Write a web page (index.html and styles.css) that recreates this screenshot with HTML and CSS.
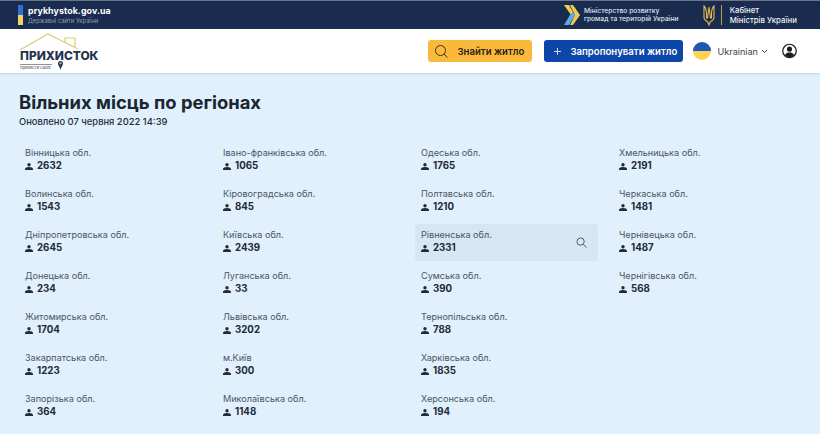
FILE: index.html
```html
<!DOCTYPE html>
<html lang="uk">
<head>
<meta charset="utf-8">
<title>Прихисток</title>
<link rel="stylesheet" href="styles.css">
</head>
<body>
<svg class="defs" width="0" height="0"><symbol id="person" viewBox="0 0 8 7"><circle cx="4" cy="1.700" r="1.700"/><path d="M0 7V6c0-1.300 1.500-2 4-2s4 .7 4 2v1z"/></symbol></svg>
<div class="gov-bar">
  <div class="gov-left">
    <svg class="ua-flag" width="5" height="20" viewBox="0 0 5 20"><rect width="5" height="10" fill="#2f6fd6"/><rect y="10" width="5" height="10" fill="#f3d45c"/></svg>
    <div class="gov-site">
      <div class="gov-domain">prykhystok.gov.ua</div>
      <div class="gov-sub">Державні сайти України</div>
    </div>
  </div>
  <div class="gov-right">
    <div class="gov-org">
      <svg width="16" height="20" viewBox="0 0 16 20"><path d="M0 0h5l4 7-2 3z" fill="#efcb4e"/><path d="M0 20h5l6-10-2-3-3 3z" fill="#5aaee6"/><path d="M6 0h3l7 10-7 10H6l5-10z" fill="#eccb55"/></svg>
      <div class="gov-min">Міністерство розвитку<br>громад та територій України</div>
    </div>
    <div class="gov-org gov-org-cabinet">
      <svg class="trident" width="12" height="22" viewBox="0 0 12 22" fill="none" stroke="#e3bb50" stroke-width="1.100"><path d="M1 2v11c0 3 2 4 3.500 4.500L6 21l1.500-3.500C9 17 11 16 11 13V2C9.500 3.500 8.500 6 8.500 10v4h-1L6 3 4.500 14h-1v-4C3.500 6 2.500 3.500 1 2z"/></svg>
      <span class="gov-divider"></span>
      <div class="gov-cab">Кабінет<br>Міністрів України</div>
    </div>
  </div>
</div>

<header class="site-header">
  <a class="logo">
    <svg class="logo-roof" width="60" height="18" viewBox="0 0 60 18" fill="none" stroke="#dccb7c" stroke-width="1.200"><path d="M0 17 28 1l30 15M45 9V5h10v10"/></svg>
    <div class="logo-name">ПРИХИСТОК</div>
    <div class="logo-row">
      <span class="logo-tag">прихисти своїх</span>
      <svg width="5" height="9" viewBox="0 0 5 9"><path d="M0 2.500a2.500 2.500 0 0 1 5 0C5 4.500 3 6 2.500 9 2 6 0 4.500 0 2.500z" fill="#24334f"/><circle cx="2.500" cy="2.300" r="1.100" fill="#dccb7c"/></svg>
    </div>
  </a>
  <nav class="actions">
    <button class="btn btn-find">
      <svg width="13" height="13" viewBox="0 0 13 13" fill="none" stroke="#3a3220" stroke-width="1"><circle cx="5.500" cy="5.500" r="5"/><path d="M9 9l3.500 3.500"/></svg>
      Знайти житло
    </button>
    <button class="btn btn-offer">
      <svg width="9" height="9" viewBox="0 0 9 9" stroke="#cfe0fa" stroke-width="1"><path d="M4.500 1v7M1 4.500h7"/></svg>
      Запропонувати житло
    </button>
    <div class="lang">
      <svg width="18" height="18" viewBox="0 0 18 18"><circle cx="9" cy="9" r="9" fill="#ffd34d"/><path d="M0 9a9 9 0 0 1 18 0z" fill="#1f57b8"/></svg>
      <span>Ukrainian</span>
      <svg width="7" height="5" viewBox="0 0 7 5" fill="none" stroke="#333" stroke-width="1"><path d="M1 1l2.500 2.500L6 1"/></svg>
    </div>
    <svg class="user" width="15" height="16" viewBox="0 0 16 16"><circle cx="8" cy="8" r="7.200" fill="none" stroke="#1c1c1c" stroke-width="1.300"/><circle cx="8" cy="6" r="2.700" fill="#1c1c1c"/><path d="M3 12.500c1-2.500 3-3 5-3s4 .5 5 3a7 7 0 0 1-10 0z" fill="#1c1c1c"/></svg>
  </nav>
</header>

<main class="content">
  <h1 class="title">Вільних місць по регіонах</h1>
  <p class="updated">Оновлено 07 червня 2022 14:39</p>
  <div class="regions">
    <div class="region"><div class="r-name">Вінницька обл.</div><div class="r-count"><svg class="p"><use href="#person"/></svg>2632</div></div>
    <div class="region"><div class="r-name">Івано-франківська обл.</div><div class="r-count"><svg class="p"><use href="#person"/></svg>1065</div></div>
    <div class="region"><div class="r-name">Одеська обл.</div><div class="r-count"><svg class="p"><use href="#person"/></svg>1765</div></div>
    <div class="region"><div class="r-name">Хмельницька обл.</div><div class="r-count"><svg class="p"><use href="#person"/></svg>2191</div></div>

    <div class="region"><div class="r-name">Волинська обл.</div><div class="r-count"><svg class="p"><use href="#person"/></svg>1543</div></div>
    <div class="region"><div class="r-name">Кіровоградська обл.</div><div class="r-count"><svg class="p"><use href="#person"/></svg>845</div></div>
    <div class="region"><div class="r-name">Полтавська обл.</div><div class="r-count"><svg class="p"><use href="#person"/></svg>1210</div></div>
    <div class="region"><div class="r-name">Черкаська обл.</div><div class="r-count"><svg class="p"><use href="#person"/></svg>1481</div></div>

    <div class="region"><div class="r-name">Дніпропетровська обл.</div><div class="r-count"><svg class="p"><use href="#person"/></svg>2645</div></div>
    <div class="region"><div class="r-name">Київська обл.</div><div class="r-count"><svg class="p"><use href="#person"/></svg>2439</div></div>
    <div class="region region-active"><div class="r-name">Рівненська обл.</div><div class="r-count"><svg class="p"><use href="#person"/></svg>2331</div>
      <svg class="r-search" width="11" height="11" viewBox="0 0 12 12" fill="none" stroke="#444f5c" stroke-width="1"><circle cx="5" cy="5" r="4"/><path d="M8 8l3.500 3.500"/></svg></div>
    <div class="region"><div class="r-name">Чернівецька обл.</div><div class="r-count"><svg class="p"><use href="#person"/></svg>1487</div></div>

    <div class="region"><div class="r-name">Донецька обл.</div><div class="r-count"><svg class="p"><use href="#person"/></svg>234</div></div>
    <div class="region"><div class="r-name">Луганська обл.</div><div class="r-count"><svg class="p"><use href="#person"/></svg>33</div></div>
    <div class="region"><div class="r-name">Сумська обл.</div><div class="r-count"><svg class="p"><use href="#person"/></svg>390</div></div>
    <div class="region"><div class="r-name">Чернігівська обл.</div><div class="r-count"><svg class="p"><use href="#person"/></svg>568</div></div>

    <div class="region"><div class="r-name">Житомирська обл.</div><div class="r-count"><svg class="p"><use href="#person"/></svg>1704</div></div>
    <div class="region"><div class="r-name">Львівська обл.</div><div class="r-count"><svg class="p"><use href="#person"/></svg>3202</div></div>
    <div class="region"><div class="r-name">Тернопільська обл.</div><div class="r-count"><svg class="p"><use href="#person"/></svg>788</div></div>
    <div class="region region-empty"></div>

    <div class="region"><div class="r-name">Закарпатська обл.</div><div class="r-count"><svg class="p"><use href="#person"/></svg>1223</div></div>
    <div class="region"><div class="r-name">м.Київ</div><div class="r-count"><svg class="p"><use href="#person"/></svg>300</div></div>
    <div class="region"><div class="r-name">Харківська обл.</div><div class="r-count"><svg class="p"><use href="#person"/></svg>1835</div></div>
    <div class="region region-empty"></div>

    <div class="region"><div class="r-name">Запорізька обл.</div><div class="r-count"><svg class="p"><use href="#person"/></svg>364</div></div>
    <div class="region"><div class="r-name">Миколаївська обл.</div><div class="r-count"><svg class="p"><use href="#person"/></svg>1148</div></div>
    <div class="region"><div class="r-name">Херсонська обл.</div><div class="r-count"><svg class="p"><use href="#person"/></svg>194</div></div>
  </div>
</main>
</body>
</html>
```

FILE: styles.css
```css
* { box-sizing: border-box; }
html, body { margin: 0; height: 434px; overflow: hidden; }
body { background: #e0f0fc; font-family: Inter, "Noto Sans", sans-serif; color: #1c2530; }
.defs { display: block; height: 0; }

.gov-bar {
  height: 29px;
  background: #1a2b50;
  border-top: 1px solid #6b7486;
  display: flex;
  justify-content: space-between;
  align-items: center;
  padding: 0 23px 0 18px;
  color: #fff;
}
.gov-left { display: flex; align-items: center; gap: 5px; }
.ua-flag { display: block; }
.gov-domain { font-size: 8.800px; font-weight: 700; line-height: 11px; letter-spacing: .1px; }
.gov-sub { font-size: 5.900px; line-height: 9px; color: #8f9bb3; }
.gov-right { display: flex; align-items: center; gap: 24px; }
.gov-org { display: flex; align-items: center; gap: 4px; }
.gov-min { font-size: 6.700px; line-height: 8px; color: #dfe4ee; font-weight: 500; }
.gov-org-cabinet { gap: 6px; }
.trident { display: block; }
.gov-divider { width: 1px; height: 20px; background: #b99e50; margin-right: 2px; }
.gov-cab { font-size: 7.800px; line-height: 10px; font-weight: 500; color: #f0f2f6; }

.site-header {
  height: 44px;
  background: #fff;
  display: flex;
  justify-content: space-between;
  align-items: center;
  padding: 0 23px 0 20px;
  box-shadow: 0 1px 2px rgba(90, 120, 150, .25);
}
.logo { display: flex; flex-direction: column; width: 80px; color: #24334f; }
.logo-roof { display: block; }
.logo-name { font-size: 11.900px; line-height: 10px; font-weight: 800; white-space: nowrap; }
.logo-row { display: flex; align-items: flex-start; gap: 6px; height: 9px; }
.logo-tag { font-size: 4.200px; color: #444; border-top: 1px solid #8a93a3; margin-top: 3px; line-height: 6px; width: 32px; white-space: nowrap; }

.actions { display: flex; align-items: center; }
.btn {
  height: 22px;
  border: 0;
  border-radius: 3px;
  display: flex;
  align-items: center;
  font: 600 9.600px Inter, sans-serif;
  padding: 0;
}
.btn-find { width: 104px; background: #fbb93c; color: #2a2213; gap: 9px; padding-left: 7px; margin-right: 12px; }
.btn-offer { width: 139px; background: #0c46a8; color: #fff; gap: 8px; padding-left: 9px; margin-right: 10px; }
.lang { display: flex; align-items: center; gap: 6px; font-size: 9.100px; color: #3a3f47; margin-right: 14px; }
.lang span { margin-right: -3px; }
.user { display: block; }

.content { padding: 18px 19px 0; }
.title { margin: 0; font-size: 18.400px; line-height: 22px; font-weight: 700; color: #1c2530; }
.updated { margin: 3px 0 0; font-size: 9.400px; line-height: 12px; font-weight: 500; color: #262e38; }
.regions {
  margin-top: 14px;
  display: grid;
  grid-template-columns: repeat(4, 183px);
  grid-auto-rows: 37px;
  column-gap: 15px;
  row-gap: 4px;
}
.region { padding: 4px 6px; border-radius: 3px; position: relative; }
.region-active { background: #d5e6f5; }
.r-name { font-size: 9.100px; line-height: 13px; color: #4c5662; }
.r-count { display: flex; align-items: center; gap: 4px; font-size: 9.700px; line-height: 14px; font-weight: 700; color: #222b37; }
.p { width: 8px; height: 7px; fill: #222b37; }
.r-search { position: absolute; right: 11px; top: 13px; }
```
